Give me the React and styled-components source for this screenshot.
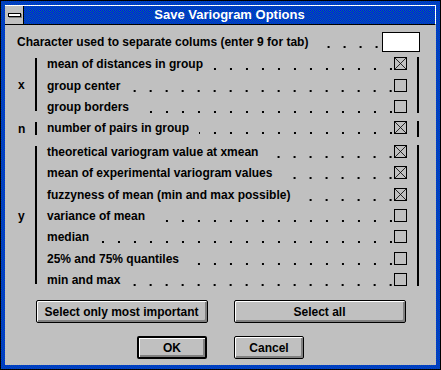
import * as React from 'react';
import styled, { createGlobalStyle } from 'styled-components';

const GlobalStyle = createGlobalStyle`
  body {
    margin: 0;
    background: #ffffff;
    font-family: 'Liberation Sans', Arial, sans-serif;
  }
`;

// dithered blue of the frame and the active caption
const checker = `
  background-color: #0000ff;
  background-image:
    linear-gradient(45deg, #008080 25%, transparent 25%, transparent 75%, #008080 75%),
    linear-gradient(45deg, #008080 25%, transparent 25%, transparent 75%, #008080 75%);
  background-size: 2px 2px;
  background-position: 0 0, 1px 1px;
`;

const Window = styled.div`
  box-sizing: border-box;
  width: 441px;
  height: 370px;
  border: 1px solid #000;
  padding: 4px;
  display: flex;
  flex-direction: column;
  ${checker}
`;
const TitleBar = styled.div`
  display: flex;
  height: 18px;
  border-top: 1px solid #fff;
  border-right: 1px solid #fff;
  border-bottom: 1px solid #000;
`;
const SysMenu = styled.div`
  width: 18px;
  background: #c0c0c0;
  border-right: 1px solid #000;
  display: flex;
  align-items: center;
  justify-content: center;
`;
const SysBar = styled.div`
  width: 11px;
  height: 2px;
  background: #fff;
  border: 1px solid #000;
  box-shadow: 1px 1px 0 #808080;
`;
const Title = styled.div`
  flex: 1;
  color: #fff;
  font-weight: bold;
  font-size: 13px;
  line-height: 18px;
  text-align: center;
`;
const Client = styled.div`
  flex: 1;
  background: #c0c0c0;
  padding: 7px 17px 0 12px;
  color: #000;
  font-size: 12px;
  font-weight: bold;
`;
const TopRow = styled.div`
  display: flex;
  align-items: center;
  height: 20px;
  margin-bottom: 4.3px;
`;
const Label = styled.span`
  white-space: nowrap;
  line-height: 14px;
`;
const Leader = styled.span`
  flex: 1;
  align-self: ${(p) => (p.$top ? 'center' : 'flex-start')};
  height: 14px;
  margin: 0 ${(p) => p.$gap || 2}px 0 10px;
  background-image: linear-gradient(to right, transparent 14px, #000 14px);
  background-size: 16px 2px;
  background-repeat: repeat-x;
  background-position: right 0 top 11px;
`;
const TextBox = styled.div`
  box-sizing: border-box;
  width: 38px;
  height: 20px;
  background: #fff;
  border: 1px solid #000;
  margin-right: -1px;
`;
const Group = styled.div`
  display: flex;
`;
const Letter = styled.div`
  width: 18px;
  margin: 2px 0 8px;
  display: flex;
  align-items: center;
  padding-left: 1px;
  box-sizing: border-box;
  line-height: 14px;
`;
const Bar = styled.div`
  width: 2px;
  background: #000;
  margin: ${(p) => (p.$right ? '1px 0 7px 10px' : '2px 10px 9px 0')};
`;
const Rows = styled.div`
  flex: 1;
  display: flex;
  flex-direction: column;
`;
const Row = styled.div`
  display: flex;
  align-items: flex-start;
  height: 21.3px;
  padding-top: 1px;
  box-sizing: border-box;
`;
const Buttons = styled.div`
  display: flex;
  justify-content: center;
  gap: ${(p) => p.$gap}px;
  margin: ${(p) => p.$mt}px 0 0 -12px;
  width: 431px;
`;
const Button = styled.button`
  box-sizing: border-box;
  width: ${(p) => p.$w}px;
  height: 23px;
  padding: 0;
  background: #c0c0c0;
  border: ${(p) => (p.$default ? 2 : 1)}px solid #000;
  border-radius: 2px;
  box-shadow: inset 1px 1px 0 #fff, inset -2px -2px 0 #808080;
  font-family: 'Liberation Sans', Arial, sans-serif;
  font-size: 12px;
  font-weight: bold;
  color: #000;
`;

const Check = ({ on }) => (
  <svg width="13" height="13" viewBox="0 0 13 13" style={{ flex: 'none' }}>
    <rect x="0.5" y="0.5" width="12" height="12" fill="none" stroke="#000" />
    {on && <path d="M1 1L12 12M12 1L1 12" stroke="#000" strokeWidth="0.8" />}
  </svg>
);

const groups = [
  {
    letter: 'x',
    rows: [
      ['mean of distances in group', true],
      ['group center', false],
      ['group borders', false],
    ],
  },
  { letter: 'n', rows: [['number of pairs in group', true]] },
  {
    letter: 'y',
    rows: [
      ['theoretical variogram value at xmean', true],
      ['mean of experimental variogram values', true],
      ['fuzzyness of mean (min and max possible)', true],
      ['variance of mean', false],
      ['median', false],
      ['25% and 75% quantiles', false],
      ['min and max', false],
    ],
  },
];

export default function App() {
  return (
    <>
      <GlobalStyle />
      <Window>
        <TitleBar>
          <SysMenu>
            <SysBar />
          </SysMenu>
          <Title>Save Variogram Options</Title>
        </TitleBar>
        <Client>
          <TopRow>
            <Label>Character used to separate colums (enter 9 for tab)</Label>
            <Leader $top $gap={4} />
            <TextBox />
          </TopRow>
          {groups.map((g) => (
            <Group key={g.letter}>
              <Letter>{g.letter}</Letter>
              <Bar />
              <Rows>
                {g.rows.map(([text, on]) => (
                  <Row key={text}>
                    <Label>{text}</Label>
                    <Leader />
                    <Check on={on} />
                  </Row>
                ))}
              </Rows>
              <Bar $right />
            </Group>
          ))}
          <Buttons $gap={26} $mt={7}>
            <Button $w={172}>Select only most important</Button>
            <Button $w={172}>Select all</Button>
          </Buttons>
          <Buttons $gap={27} $mt={13}>
            <Button $w={70} $default>OK</Button>
            <Button $w={70}>Cancel</Button>
          </Buttons>
        </Client>
      </Window>
    </>
  );
}
